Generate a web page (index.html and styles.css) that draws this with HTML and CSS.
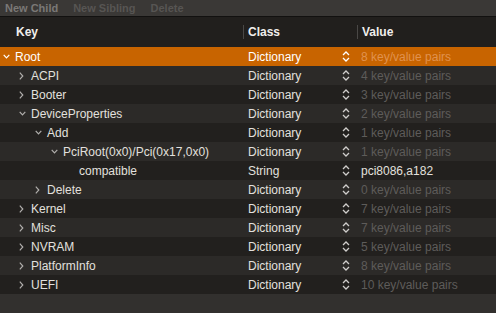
FILE: index.html
```html
<!DOCTYPE html>
<html lang="en">
<head>
    <meta charset="UTF-8">
    <title>Plist Editor</title>
    <link rel="stylesheet" href="styles.css">
</head>
<body>
    <!-- Toolbar -->
    <div class="toolbar">
        <span class="tool active">New Child</span>
        <span class="tool">New Sibling</span>
        <span class="tool">Delete</span>
    </div>

    <div class="header">
        <div class="hcell">Key</div>
        <div class="hcell sep">Class</div>
        <div class="hcell sep">Value</div>
    </div>

    <div class="rows" id="rows"></div>

    <script>
        // Árvore do plist
        const data = [
            { key: "Root", lvl: 0, open: true, cls: "Dictionary", val: "8 key/value pairs", sel: true },
            { key: "ACPI", lvl: 1, cls: "Dictionary", val: "4 key/value pairs" },
            { key: "Booter", lvl: 1, cls: "Dictionary", val: "3 key/value pairs" },
            { key: "DeviceProperties", lvl: 1, open: true, cls: "Dictionary", val: "2 key/value pairs" },
            { key: "Add", lvl: 2, open: true, cls: "Dictionary", val: "1 key/value pairs" },
            { key: "PciRoot(0x0)/Pci(0x17,0x0)", lvl: 3, open: true, cls: "Dictionary", val: "1 key/value pairs" },
            { key: "compatible", lvl: 4, leaf: true, cls: "String", val: "pci8086,a182" },
            { key: "Delete", lvl: 2, cls: "Dictionary", val: "0 key/value pairs" },
            { key: "Kernel", lvl: 1, cls: "Dictionary", val: "7 key/value pairs" },
            { key: "Misc", lvl: 1, cls: "Dictionary", val: "7 key/value pairs" },
            { key: "NVRAM", lvl: 1, cls: "Dictionary", val: "5 key/value pairs" },
            { key: "PlatformInfo", lvl: 1, cls: "Dictionary", val: "8 key/value pairs" },
            { key: "UEFI", lvl: 1, cls: "Dictionary", val: "10 key/value pairs" }
        ];

        const down = '<svg width="7" height="5" viewBox="0 0 7 5"><polyline points="0.7,0.8 3.5,3.8 6.3,0.8" fill="none" stroke="currentColor" stroke-width="1.2"/></svg>';
        const right = '<svg width="5" height="8" viewBox="0 0 5 8"><polyline points="0.8,0.7 3.8,4 0.8,7.3" fill="none" stroke="currentColor" stroke-width="1.2"/></svg>';
        const updown = '<svg width="8" height="11" viewBox="0 0 8 11"><polyline points="1,4 4,1 7,4" fill="none" stroke="currentColor" stroke-width="1.3"/><polyline points="1,7 4,10 7,7" fill="none" stroke="currentColor" stroke-width="1.3"/></svg>';

        let html = "";
        data.forEach(function(r, i) {
            let rowCls = "row " + (i % 2 ? "odd" : "even") + (r.sel ? " selected" : "");
            let arrow = r.leaf ? "" : (r.open ? down : right);
            let valCls = r.cls === "Dictionary" ? "val count" : "val";
            html += `<div class="${rowCls}">
                <div class="key" style="padding-left:${3 + r.lvl * 16}px"><span class="disc">${arrow}</span>${r.key}</div>
                <div class="cls"><span>${r.cls}</span><span class="updown">${updown}</span></div>
                <div class="${valCls}">${r.val}</div>
            </div>`;
        });
        document.getElementById("rows").innerHTML = html;
    </script>
</body>
</html>
```

FILE: styles.css
```css
body {
    margin: 0;
    height: 313px;
    overflow: hidden;
    background-color: #32302e;
    font-family: "Liberation Sans", Arial, sans-serif;
    font-size: 12px;
    color: #e2e0de;
}

/* Barra de ferramentas */
.toolbar {
    height: 16px;
    display: flex;
    align-items: center;
    gap: 15px;
    padding-left: 5px;
    background-color: #3a3836;
    border-bottom: 1px solid #121110;
    font-size: 11px;
}

.tool {
    font-weight: bold;
    color: #575553;
}

.tool.active {
    color: #7a7876;
}

/* Cabeçalho */
.header {
    display: grid;
    grid-template-columns: 243px 114px 1fr;
    height: 30px;
    background-color: #211f1d;
    align-items: center;
}

.hcell {
    font-weight: bold;
    color: #f0eeec;
    padding-left: 16px;
}

.hcell.sep {
    border-left: 1px solid #4a4846;
    padding-left: 4px;
    line-height: 14px;
}

/* Linhas */
.row {
    display: grid;
    grid-template-columns: 244px 113px 1fr;
    height: 19px;
    align-items: center;
    white-space: nowrap;
}

.row.even {
    background-color: #22201e;
}

.row.odd {
    background-color: #2c2a28;
}

.row.selected {
    background-color: #c86400;
    color: #ffffff;
}

.key {
    display: flex;
    align-items: center;
}

.disc {
    width: 12px;
    display: flex;
    align-items: center;
    color: #b0aeac;
}

.selected .disc {
    color: #ffffff;
}

.cls {
    display: flex;
    justify-content: space-between;
    align-items: center;
    padding-left: 4px;
    padding-right: 7px;
}

.updown {
    display: flex;
    color: #d0cecc;
}

.selected .updown {
    color: #ffffff;
}

.val {
    padding-left: 4px;
}

.val.count {
    color: #5e5c5a;
}

.selected .val.count {
    color: #e0924f;
}
```
